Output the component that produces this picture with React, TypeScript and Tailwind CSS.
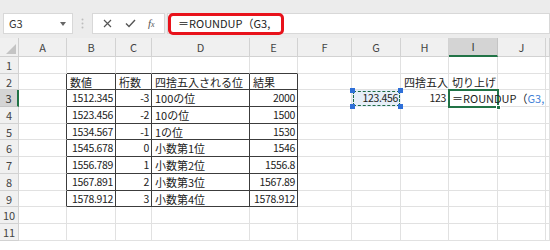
import React from 'react';

const COLS = ['A', 'B', 'C', 'D', 'E', 'F', 'G', 'H', 'I', 'J', ''];

type Cell = { text: string; align: 'l' | 'r' };

// rows 2..9, columns B..E
const TABLE: string[][] = [
  ['数値', '桁数', '四捨五入される位', '結果'],
  ['1512.345', '-3', '100の位', '2000'],
  ['1523.456', '-2', '10の位', '1500'],
  ['1534.567', '-1', '1の位', '1530'],
  ['1545.678', '0', '小数第1位', '1546'],
  ['1556.789', '1', '小数第2位', '1556.8'],
  ['1567.891', '2', '小数第3位', '1567.89'],
  ['1578.912', '3', '小数第4位', '1578.912'],
];

function getCell(row: number, col: number): Cell | null {
  // col: 1 = A
  if (row >= 2 && row <= 9 && col >= 2 && col <= 5) {
    const text = TABLE[row - 2][col - 2];
    const isNum = /^-?[0-9.]+$/.test(text) && row > 2;
    return { text, align: isNum ? 'r' : 'l' };
  }
  if (row === 2 && col === 8) return { text: '四捨五入', align: 'l' };
  if (row === 2 && col === 9) return { text: '切り上げ', align: 'l' };
  if (row === 3 && col === 8) return { text: '123', align: 'r' };
  return null;
}

function borderClass(row: number, col: number) {
  const inTable = row >= 2 && row <= 9 && col >= 2 && col <= 5;
  const leftOfTable = row >= 2 && row <= 9 && col === 1;
  const aboveTable = row === 1 && col >= 2 && col <= 5;
  if (inTable) return 'border-r border-b border-r-[#3c3c3c] border-b-[#3c3c3c]';
  if (leftOfTable) return 'border-r border-b border-r-[#3c3c3c] border-b-[#e1e1e1]';
  if (aboveTable) return 'border-r border-b border-r-[#e1e1e1] border-b-[#3c3c3c]';
  return 'border-r border-b border-[#e1e1e1]';
}

function CornerCell() {
  return (
    <div className="relative bg-[#f0f0f0] border-r border-b border-[#cfcfcf]">
      <svg className="absolute right-[2px] bottom-[2px]" width="10" height="10" viewBox="0 0 10 10">
        <polygon points="10,0 10,10 0,10" fill="#c4c4c4" />
      </svg>
    </div>
  );
}

function RefCell() {
  // G3 highlighted as formula reference with marching ants
  return (
    <div className="relative bg-[#e6eef8] text-right pr-[3px] text-[10.5px] tracking-[-0.35px] text-[#222]">
      <div className="absolute inset-[1px] border border-dashed border-[#1f6b45]" />
      <span className="absolute left-[-2px] top-[-2px] w-[5px] h-[5px] bg-[#2e6fd8]" />
      <span className="absolute right-[-2px] top-[-2px] w-[5px] h-[5px] bg-[#2e6fd8]" />
      <span className="absolute left-[-2px] bottom-[-2px] w-[5px] h-[5px] bg-[#2e6fd8]" />
      <span className="absolute right-[-2px] bottom-[-2px] w-[5px] h-[5px] bg-[#2e6fd8]" />
      <span className="relative">123.456</span>
    </div>
  );
}

function ActiveCell() {
  return (
    <div className="relative z-10 whitespace-nowrap pl-[3px] text-[#222] overflow-visible">
      <div className="absolute inset-[-1px] border-2 border-[#217346]" />
      <span className="absolute right-[-3px] bottom-[-3px] w-[5px] h-[5px] bg-[#217346] border border-white" />
      <span className="relative">
        ＝ROUNDUP（<span className="text-[#3f7fd6]">G3,</span>
      </span>
    </div>
  );
}

export default function App() {
  const rows = Array.from({ length: 11 }, (_, i) => i + 1);

  return (
    <div
      className="w-[550px] h-[250px] overflow-hidden bg-white text-[11px] text-[#222]"
      style={{ fontFamily: '"Noto Sans CJK JP", "Liberation Sans", sans-serif' }}
    >
      {/* formula bar */}
      <div className="h-[38px] bg-[#ececec] pt-[13px] pl-[3px] flex items-start">
        <div className="h-[21px] w-[70px] bg-white border border-[#d8d8d8] flex items-center justify-between pl-[5px] pr-[6px] text-[#333]">
          <span>G3</span>
          <svg width="6" height="4" viewBox="0 0 6 4">
            <polygon points="0,0 6,0 3,4" fill="#666" />
          </svg>
        </div>
        <div className="w-[19px] h-[21px] flex items-center justify-center">
          <svg width="3" height="11" viewBox="0 0 3 11">
            <circle cx="1.5" cy="1.5" r="1" fill="#bdbdbd" />
            <circle cx="1.5" cy="5.5" r="1" fill="#bdbdbd" />
            <circle cx="1.5" cy="9.5" r="1" fill="#bdbdbd" />
          </svg>
        </div>
        <div className="h-[21px] w-[73px] bg-white border border-[#d8d8d8] flex items-center">
          <svg className="ml-[10px]" width="9" height="9" viewBox="0 0 9 9">
            <path d="M1 1 L8 8 M8 1 L1 8" stroke="#555" strokeWidth="1.2" />
          </svg>
          <svg className="ml-[13px]" width="11" height="9" viewBox="0 0 11 9">
            <path d="M1 4.5 L4 7.5 L10 1" stroke="#555" strokeWidth="1.4" fill="none" />
          </svg>
          <span
            className="ml-[12px] italic text-[11px] text-[#555]"
            style={{ fontFamily: '"Liberation Serif", serif' }}
          >
            f<span className="text-[8px]">x</span>
          </span>
        </div>
        <div className="relative ml-[2px] h-[21px] flex-1 bg-white border border-[#d8d8d8] flex items-center pl-[10px] text-[#222]">
          <span>＝ROUNDUP（G3,</span>
          <div className="absolute left-[0px] top-[-1px] w-[116px] h-[22px] rounded-[5px] border-[3px] border-[#e8121b]" />
        </div>
      </div>

      {/* sheet grid */}
      <div className="grid grid-cols-[19px_48px_49px_36px_98px_48px_54px_49px_48px_49px_48px_1fr] grid-rows-[19px_repeat(11,16.7px)] leading-[16px]">
        <CornerCell />
        {COLS.map((c, i) => (
          <div
            key={i}
            className={
              c === 'I'
                ? 'bg-[#d4d4d4] border-r border-b-2 border-r-[#c4c4c4] border-b-[#217346] text-center text-[11px] text-[#333] leading-[17px]'
                : 'bg-[#f0f0f0] border-r border-b border-[#d2d2d2] text-center text-[11px] text-[#444] leading-[18px]'
            }
          >
            {c}
          </div>
        ))}

        {rows.map((r) => (
          <React.Fragment key={r}>
            <div
              className={
                r === 3
                  ? 'bg-[#d4d4d4] border-r-2 border-b border-r-[#217346] border-b-[#c4c4c4] text-center text-[11px] text-[#333]'
                  : 'bg-[#f0f0f0] border-r border-b border-[#d2d2d2] text-center text-[11px] text-[#444]'
              }
            >
              {r}
            </div>
            {COLS.map((_, i) => {
              const col = i + 1;
              if (r === 3 && col === 7) return <RefCell key={col} />;
              if (r === 3 && col === 9) return <ActiveCell key={col} />;
              const cell = getCell(r, col);
              return (
                <div
                  key={col}
                  className={`${borderClass(r, col)} whitespace-nowrap overflow-hidden ${
                    cell?.align === 'r'
                      ? 'text-right pr-[2px] text-[10.5px] tracking-[-0.35px]'
                      : 'text-left pl-[3px] text-[11px]'
                  }`}
                >
                  {cell?.text}
                </div>
              );
            })}
          </React.Fragment>
        ))}
      </div>
    </div>
  );
}
